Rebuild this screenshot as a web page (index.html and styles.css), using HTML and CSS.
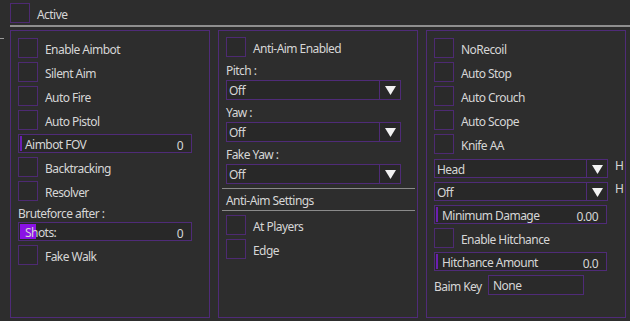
FILE: index.html
```html
<!DOCTYPE html>
<html>
<head>
<meta charset="utf-8">
<link rel="stylesheet" href="styles.css">
</head>
<body>
<div class="header">
  <span class="cb"></span><span class="lbl">Active</span>
</div>
<div class="rule"></div>
<div class="main">
  <span class="dash"></span>
  <div class="panel p1">
    <div class="row"><span class="cb"></span><span class="lbl">Enable Aimbot</span></div>
    <div class="row"><span class="cb"></span><span class="lbl">Silent Aim</span></div>
    <div class="row"><span class="cb"></span><span class="lbl">Auto Fire</span></div>
    <div class="row"><span class="cb"></span><span class="lbl">Auto Pistol</span></div>
    <div class="slider s19"><span class="fill"></span><span class="sname">Aimbot FOV</span><span class="sval">0</span></div>
    <div class="row"><span class="cb"></span><span class="lbl">Backtracking</span></div>
    <div class="row"><span class="cb"></span><span class="lbl">Resolver</span></div>
    <div class="text-label">Bruteforce after :</div>
    <div class="slider s19"><span class="fill big"></span><span class="sname">Shots:</span><span class="sval">0</span></div>
    <div class="row"><span class="cb"></span><span class="lbl">Fake Walk</span></div>
  </div>
  <div class="panel p2">
    <div class="row"><span class="cb"></span><span class="lbl">Anti-Aim Enabled</span></div>
    <div class="field-label first">Pitch :</div>
    <div class="combo"><span class="cval">Off</span><span class="arrow"><svg width="11" height="9" viewBox="0 0 11 9"><path d="M0 0H11L5.5 9Z" fill="#f2f2f2"/></svg></span></div>
    <div class="field-label">Yaw :</div>
    <div class="combo"><span class="cval">Off</span><span class="arrow"><svg width="11" height="9" viewBox="0 0 11 9"><path d="M0 0H11L5.5 9Z" fill="#f2f2f2"/></svg></span></div>
    <div class="field-label">Fake Yaw :</div>
    <div class="combo"><span class="cval">Off</span><span class="arrow"><svg width="11" height="9" viewBox="0 0 11 9"><path d="M0 0H11L5.5 9Z" fill="#f2f2f2"/></svg></span></div>
    <div class="sep"></div>
    <div class="section">Anti-Aim Settings</div>
    <div class="sep sep2"></div>
    <div class="row r-at"><span class="cb"></span><span class="lbl">At Players</span></div>
    <div class="row"><span class="cb"></span><span class="lbl">Edge</span></div>
  </div>
  <div class="panel p3">
    <div class="row"><span class="cb"></span><span class="lbl">NoRecoil</span></div>
    <div class="row"><span class="cb"></span><span class="lbl">Auto Stop</span></div>
    <div class="row"><span class="cb"></span><span class="lbl">Auto Crouch</span></div>
    <div class="row"><span class="cb"></span><span class="lbl">Auto Scope</span></div>
    <div class="row"><span class="cb"></span><span class="lbl">Knife AA</span></div>
    <div class="combo-line first">
      <div class="combo wide"><span class="cval">Head</span><span class="arrow"><svg width="11" height="9" viewBox="0 0 11 9"><path d="M0 0H11L5.5 9Z" fill="#f2f2f2"/></svg></span></div>
      <span class="hint">H</span>
    </div>
    <div class="combo-line">
      <div class="combo wide"><span class="cval">Off</span><span class="arrow"><svg width="11" height="9" viewBox="0 0 11 9"><path d="M0 0H11L5.5 9Z" fill="#f2f2f2"/></svg></span></div>
      <span class="hint">H</span>
    </div>
    <div class="slider wide s19"><span class="fill"></span><span class="sname">Minimum Damage</span><span class="sval">0.00</span></div>
    <div class="row"><span class="cb"></span><span class="lbl">Enable Hitchance</span></div>
    <div class="slider wide s19"><span class="fill"></span><span class="sname">Hitchance Amount</span><span class="sval">0.0</span></div>
    <div class="keyline"><span class="klabel">Baim Key</span><span class="keybox">None</span></div>
  </div>
</div>
</body>
</html>
```

FILE: styles.css
```css
* { box-sizing: border-box; }
html, body { margin: 0; padding: 0; }
body {
  width: 630px;
  height: 321px;
  overflow: hidden;
  background: #2d2d2d;
  color: #d6d6d6;
  font-family: "Noto Sans", "Lato", sans-serif;
  font-size: 12px;
  letter-spacing: -0.55px;
}
.header {
  display: flex;
  align-items: center;
  height: 24px;
  padding: 2px 0 0 10px;
}
.header .lbl { margin-left: 7px; padding-top: 2px; }
.cb {
  display: inline-block;
  flex: none;
  width: 20px;
  height: 20px;
  border: 1px solid #4d2a72;
  background: #2a2a2a;
}
.rule {
  height: 2px;
  margin: 1px 0 0 10px;
  background: #8e8e8e;
}
.main {
  display: flex;
  margin-top: 3px;
}
.dash {
  flex: none;
  width: 4px;
  height: 1px;
  margin: 8px 6px 0 0;
  background: #9a9a9a;
}
.panel {
  flex: none;
  height: 288px;
  border: 1px solid #4f2b78;
  display: flex;
  flex-direction: column;
}
.p1 { width: 200px; padding: 7px 0 0 7px; gap: 4px; }
.p2 { width: 200px; margin-left: 8px; padding: 6px 0 0 7px; }
.p3 { width: 200px; margin-left: 8px; padding: 7px 0 0 7px; gap: 4px; }
.row {
  display: flex;
  align-items: center;
  height: 20px;
}
.row .lbl { margin-left: 7px; padding-top: 3px; }
.slider {
  position: relative;
  display: flex;
  align-items: center;
  width: 174px;
  height: 20px;
  border: 1px solid #4f2b78;
  background: #282828;
  padding: 1px 8px 0 6px;
}
.slider.wide { width: 173px; padding-left: 7px; }
.slider.s19 { height: 19px; }
.fill {
  position: absolute;
  left: 1px;
  top: 1px;
  bottom: 1px;
  width: 2px;
  background: #6a1fb0;
}
.fill.big { width: 16px; background: #8a12e6; }
.sname { position: relative; flex: 1; }
.sval { padding-top: 3px; }
.text-label {
  height: 13px;
  line-height: 13px;
  padding-top: 1px;
  margin-top: 1px;
  margin-bottom: -1px;
}
.field-label {
  height: 22px;
  padding-top: 4px;
  line-height: 18px;
}
.field-label.first { height: 23px; padding-top: 5px; }
.combo {
  display: flex;
  width: 175px;
  height: 20px;
  border: 1px solid #4f2b78;
  background: #282828;
}
.combo.wide { width: 174px; height: 19px; }
.cval { flex: 1; line-height: 17px; padding: 1px 0 0 2px; }
.arrow {
  width: 21px;
  border-left: 1px solid #4f2b78;
  display: flex;
  align-items: center;
  justify-content: center;
}
.arrow svg { display: block; margin-top: 1px; }
.combo-line {
  display: flex;
  align-items: flex-start;
  height: 19px;
}
.combo-line.first { margin-top: 1px; }
.hint { margin-left: 7px; line-height: 14px; }
.sep {
  height: 1px;
  margin: 4px 2px 0 -4px;
  background: #8a8a8a;
}
.sep2 { margin-top: 0; }
.section {
  height: 21px;
  line-height: 20px;
  padding-top: 2px;
}
.r-at { margin-top: 4px; margin-bottom: 4px; }
.keyline {
  display: flex;
  align-items: center;
  height: 21px;
  margin-top: -1px;
}
.klabel { width: 54px; padding-top: 3px; }
.keybox {
  width: 96px;
  height: 20px;
  line-height: 18px;
  padding: 1px 0 0 4px;
  border: 1px solid #4f2b78;
  background: #2a2a2a;
}
```
